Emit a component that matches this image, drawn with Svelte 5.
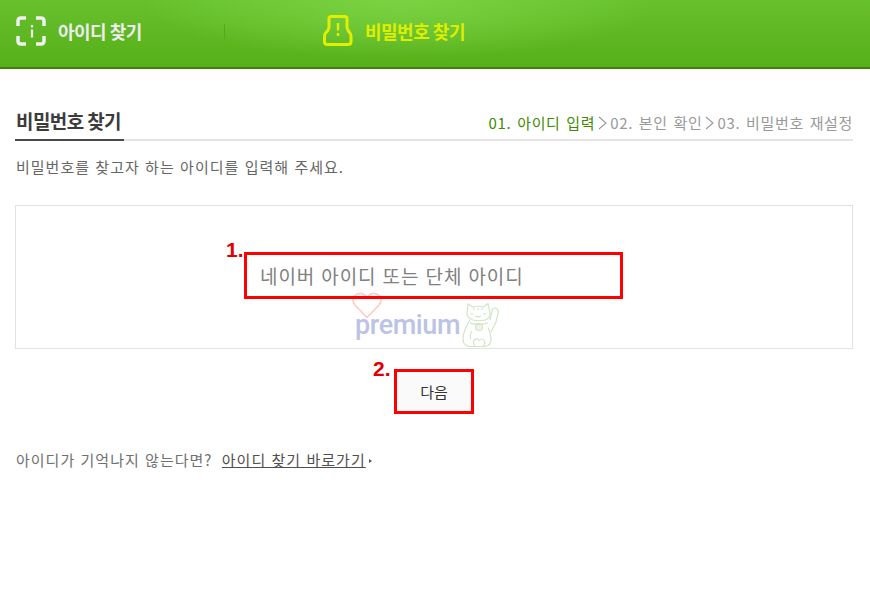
<script>
	const steps = [
		{ label: '01. 아이디 입력', active: true },
		{ label: '02. 본인 확인', active: false },
		{ label: '03. 비밀번호 재설정', active: false }
	];
</script>

<header class="top">
	<div class="tab tab-id">
		<svg width="30" height="30" viewBox="0 0 30 30" fill="none" stroke="#f0f0f0" stroke-width="3.500">
			<path d="M2 10V5q0-3 3-3h5M20 2h5q3 0 3 3v5M28 20v5q0 3-3 3h-5M10 28H5q-3 0-3-3v-5" />
			<path d="M16 9v2.500M16 13.500v8" stroke-width="2.200" />
		</svg>
		<span>아이디 찾기</span>
		<i class="divider"></i>
	</div>
	<div class="tab tab-pw">
		<svg width="30" height="32" viewBox="0 0 30 32" fill="none" stroke="#e2ef00" stroke-width="3">
			<path d="M8 1.500h14q2 0 2 2V12q0 2 1.500 4l1.500 2q1 1.500 1 3.500v5q0 3-3 3H4.500q-3 0-3-3v-5q0-2 1-3.500L4.500 16Q6 14 6 12V3.500q0-2 2-2z" />
			<path d="M15 8v7.500M15 18v3" stroke-width="2.400" />
		</svg>
		<span>비밀번호 찾기</span>
	</div>
</header>

<main class="page">
	<div class="title-row">
		<h2>비밀번호 찾기</h2>
		<ol class="steps">
			{#each steps as step, i}
				{#if i > 0}
					<li class="sep">
						<svg width="9" height="14" viewBox="0 0 9 14" fill="none" stroke="#999" stroke-width="1.100">
							<path d="M1 1l7 6-7 6" />
						</svg>
					</li>
				{/if}
				<li class:active={step.active}>{step.label}</li>
			{/each}
		</ol>
	</div>
	<p class="intro">비밀번호를 찾고자 하는 아이디를 입력해 주세요.</p>

	<div class="box">
		<div class="field">
			<span class="num num-1">1.</span>
			<div class="input">네이버 아이디 또는 단체 아이디</div>
		</div>
		<div class="watermark">
			<svg class="heart" width="30" height="27" viewBox="0 0 30 27" fill="none" stroke="#ffc9c0" stroke-width="1.500">
				<path d="M15 25.500L3 13Q0 9 1.500 5.500 4 1 9 1.500 13 2 15 6 17 2 21 1.500 26 1 28.500 5.500 30 9 27 13Z" />
			</svg>
			<span class="premium">premium</span>
			<svg class="cat" width="37" height="44" viewBox="0 0 37 44" fill="none" stroke="#d3e4c6" stroke-width="1.200">
				<path d="M6 1l5 3q5-1.500 10 0l5-3.500 2 10q0 5-5 6.500-6 1.500-12 0-6-2-6-7z" />
				<path d="M12 5v2M16 5v2M20 5v2M8 11h3M21 11h3M13 13l3 1 3-1" />
				<path d="M28 17l2-9q0-3 3-3 4 1 3 5l-2 9-5 10" />
				<path d="M8 17Q1 28 1 36q0 6 6 7.500h16q6-1 6-7 0-5-3-12" />
				<circle cx="17" cy="24" r="3.500" fill="#eef5e6" />
				<path d="M8 20q9 3 18 0" />
				<path d="M13 43.500q-3-4 0-7 3-2 4 1M17 37.500q3-3 5 0 2 3-1 6M10 28q-3 4-1 8" />
			</svg>
		</div>
	</div>

	<div class="actions">
		<span class="num num-2">2.</span>
		<div class="next">다음</div>
	</div>

	<p class="help">아이디가 기억나지 않는다면? <a href="#find">아이디 찾기 바로가기</a><span class="arrow"></span></p>
</main>

<style>
	:global(body) {
		background: #fff;
		font-family: 'Noto Sans CJK KR', 'Liberation Sans', sans-serif;
	}

	.top {
		height: 67px;
		display: flex;
		align-items: center;
		background: radial-gradient(ellipse 260px 60px at 400px 0, #7bd343 0%, rgba(123, 211, 67, 0) 100%), linear-gradient(#67c02d, #56b018);
		border-bottom: 2px solid #3f7f10;
	}

	.tab {
		position: relative;
		display: flex;
		align-items: center;
		gap: 12px;
		font-size: 18px;
		font-weight: 700;
		letter-spacing: -0.5px;
		margin-top: -6px;
	}

	.tab-id {
		width: 308px;
		padding-left: 16px;
		box-sizing: border-box;
		color: #ececec;
	}

	.divider {
		position: absolute;
		left: 224px;
		top: 8px;
		width: 1px;
		height: 15px;
		background: #5aa81e;
	}

	.tab-pw {
		padding-left: 15px;
		gap: 12px;
		color: #dfee00;
	}

	.page {
		padding: 0 17px 0 15px;
	}

	.title-row {
		display: flex;
		justify-content: space-between;
		align-items: flex-end;
		height: 70px;
		border-bottom: 2px solid #e4e4e4;
	}

	h2 {
		margin: 0 0 -2px;
		width: 109px;
		height: 34px;
		box-sizing: border-box;
		padding-left: 1px;
		border-bottom: 2px solid #4a4a4a;
		font-size: 19px;
		line-height: 28px;
		letter-spacing: -0.6px;
		color: #3c3c3c;
	}

	.steps {
		display: flex;
		align-items: center;
		gap: 3px;
		margin: 0;
		padding: 0 0 7px;
		list-style: none;
		font-size: 15px;
		line-height: 18px;
		letter-spacing: 0.650px;
		word-spacing: 1.800px;
		color: #999;
	}

	.steps .active {
		color: #3f8a00;
	}

	.sep {
		display: flex;
	}

	.intro {
		margin: 17px 0 0;
		padding-left: 1px;
		font-size: 15px;
		line-height: 18px;
		letter-spacing: 1px;
		word-spacing: 1px;
		color: #666;
	}

	.box {
		position: relative;
		margin-top: 29px;
		height: 142px;
		border: 1px solid #e2e2e2;
		display: flex;
		justify-content: center;
	}

	.field {
		position: relative;
		z-index: 1;
		margin: 46px 1px 0 0;
	}

	.input {
		width: 379px;
		height: 47px;
		box-sizing: border-box;
		border: 3px solid #f00;
		padding-left: 13px;
		font-size: 19px;
		line-height: 41px;
		letter-spacing: 0.900px;
		word-spacing: 1px;
		color: #808080;
	}

	.num {
		position: absolute;
		font-family: 'Liberation Sans', sans-serif;
		font-weight: 700;
		font-size: 21px;
		line-height: 22px;
		color: #e00000;
	}

	.num-1 {
		left: -18px;
		top: -13px;
	}

	.num-2 {
		left: -21px;
		top: -11px;
	}

	.watermark {
		position: absolute;
		left: 336px;
		top: 86px;
		width: 150px;
		height: 62px;
	}

	.heart {
		position: absolute;
		left: 0;
		top: 0;
	}

	.premium {
		position: absolute;
		left: 3px;
		top: 16px;
		font-family: 'Roboto', sans-serif;
		font-weight: 500;
		font-size: 27px;
		line-height: 34px;
		letter-spacing: -0.4px;
		color: #bcc3e4;
	}

	.cat {
		position: absolute;
		left: 110px;
		top: 11px;
	}

	.actions {
		position: relative;
		width: 80px;
		margin: 20px auto 0;
	}

	.next {
		width: 80px;
		height: 45px;
		box-sizing: border-box;
		border: 3px solid #f00;
		background: #fafafa;
		font-size: 15px;
		line-height: 39px;
		text-align: center;
		color: #333;
	}

	.help {
		margin: 36px 0 0;
		padding-left: 1px;
		font-size: 15px;
		line-height: 20px;
		letter-spacing: 1px;
		word-spacing: 1px;
		color: #707070;
	}

	.help a {
		margin-left: 4px;
		color: #505050;
		text-decoration: underline;
	}

	.arrow {
		display: inline-block;
		margin-left: 3px;
		vertical-align: 3px;
		border-left: 3px solid #555;
		border-top: 2.500px solid transparent;
		border-bottom: 2.500px solid transparent;
	}
</style>
